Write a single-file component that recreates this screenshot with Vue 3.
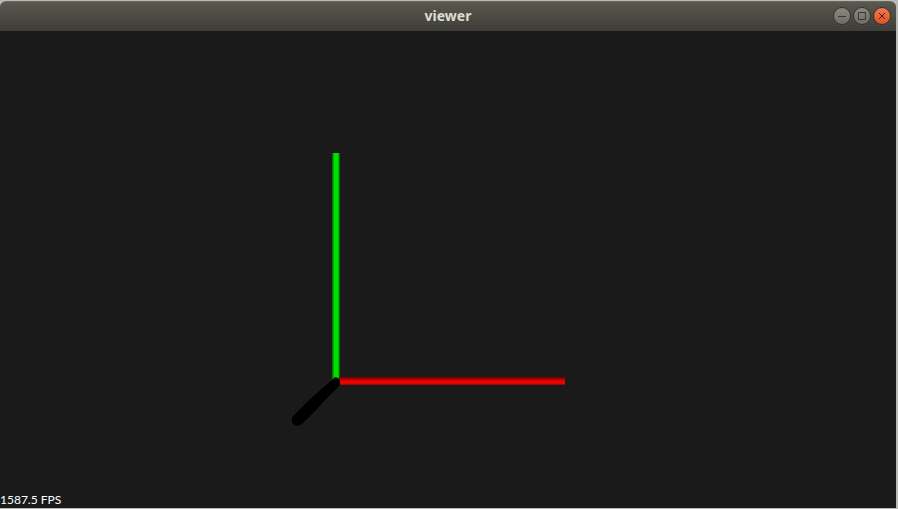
<!-- App.vue -->
<template>
    <div class="desktop">
        <main class="window">
            <header class="title-bar">
                <h1 class="title">{{ title }}</h1>
                <div class="controls">
                    <button
                        v-for="control in controls"
                        :key="control.name"
                        type="button"
                        class="control"
                        :class="control.name"
                        :aria-label="control.label"
                    >
                        <svg viewBox="0 0 16 16" class="glyph" aria-hidden="true">
                            <path :d="control.path" />
                        </svg>
                    </button>
                </div>
            </header>
            <section class="viewport">
                <svg class="scene" viewBox="0 0 896 477" role="img" aria-label="Coordinate axes">
                    <defs>
                        <linearGradient id="axis-x" x1="0" y1="0" x2="0" y2="1">
                            <stop offset="0" stop-color="#600000" />
                            <stop offset="0.3" stop-color="#b00000" />
                            <stop offset="0.55" stop-color="#f00000" />
                            <stop offset="0.8" stop-color="#e80000" />
                            <stop offset="1" stop-color="#900000" />
                        </linearGradient>
                        <linearGradient id="axis-y" x1="0" y1="0" x2="1" y2="0">
                            <stop offset="0" stop-color="#005a00" />
                            <stop offset="0.2" stop-color="#00b400" />
                            <stop offset="0.3" stop-color="#00e000" />
                            <stop offset="0.75" stop-color="#00e000" />
                            <stop offset="0.85" stop-color="#00a000" />
                            <stop offset="1" stop-color="#005000" />
                        </linearGradient>
                    </defs>
                    <rect x="332" y="122" width="8" height="227" fill="url(#axis-y)" />
                    <rect x="339" y="346" width="226" height="8" fill="url(#axis-x)" />
                    <path
                        d="M333 348 L335 346 L338 347 L340 349 L340 354 L325 369 L317 378 L302 393 L298 395 L294 394 L292 391 L292 386 L307 371 L318 361 Z"
                        fill="#000"
                    />
                </svg>
                <p class="stats">{{ fps }} FPS</p>
            </section>
        </main>
    </div>
</template>

<style>
body {
    margin: 0;
}
</style>

<style scoped>
.desktop {
    box-sizing: border-box;
    display: flex;
    height: 100vh;
    padding: 1px 2px 1px 0;
    background: #b9b9b7;
    font-family: "Open Sans", "Noto Sans", sans-serif;
}

.window {
    display: flex;
    flex: 1;
    flex-direction: column;
    min-width: 0;
}

.title-bar {
    box-sizing: border-box;
    display: grid;
    grid-template-columns: 1fr auto 1fr;
    align-items: center;
    height: 30px;
    padding: 0 5px 1px;
    border-top: 1px solid #68685d;
    border-radius: 6px 6px 0 0;
    background: linear-gradient(#59584f, #3e3d38);
}

.title {
    grid-column: 2;
    margin: 0;
    color: #dfdbd2;
    font-family: "Noto Sans", sans-serif;
    font-size: 14px;
    font-weight: 700;
    line-height: 20px;
}

.controls {
    display: flex;
    justify-content: flex-end;
    gap: 2px;
}

.control {
    box-sizing: border-box;
    width: 18px;
    height: 18px;
    padding: 0;
    border: 1px solid #34332f;
    border-radius: 50%;
    background: linear-gradient(#8a8981, #6d6c65);
    color: #383732;
}

.control.close {
    background: linear-gradient(#f3784c, #de5326);
    color: #3c2318;
}

.glyph {
    display: block;
    width: 16px;
    height: 16px;
    fill: none;
    stroke: currentColor;
}

.viewport {
    position: relative;
    flex: 1;
    min-height: 0;
    background: #1a1a1a;
}

.scene {
    display: block;
    width: 100%;
    height: 100%;
}

.stats {
    position: absolute;
    bottom: 0;
    left: 0;
    margin: 0;
    color: #fff;
    font-family: Lato, sans-serif;
    font-size: 12px;
    line-height: 16px;
}
</style>

<script setup>
import { ref } from 'vue';

const title = ref('viewer');
const fps = ref(1587.5);

// Window buttons, left to right
const controls = [
    { name: 'minimize', label: 'Minimize', path: 'M4 8.5H12' },
    { name: 'maximize', label: 'Maximize', path: 'M4.5 4.5H11.5V11.5H4.5Z' },
    { name: 'close', label: 'Close', path: 'M5 5L11 11M11 5L5 11' }
];
</script>
